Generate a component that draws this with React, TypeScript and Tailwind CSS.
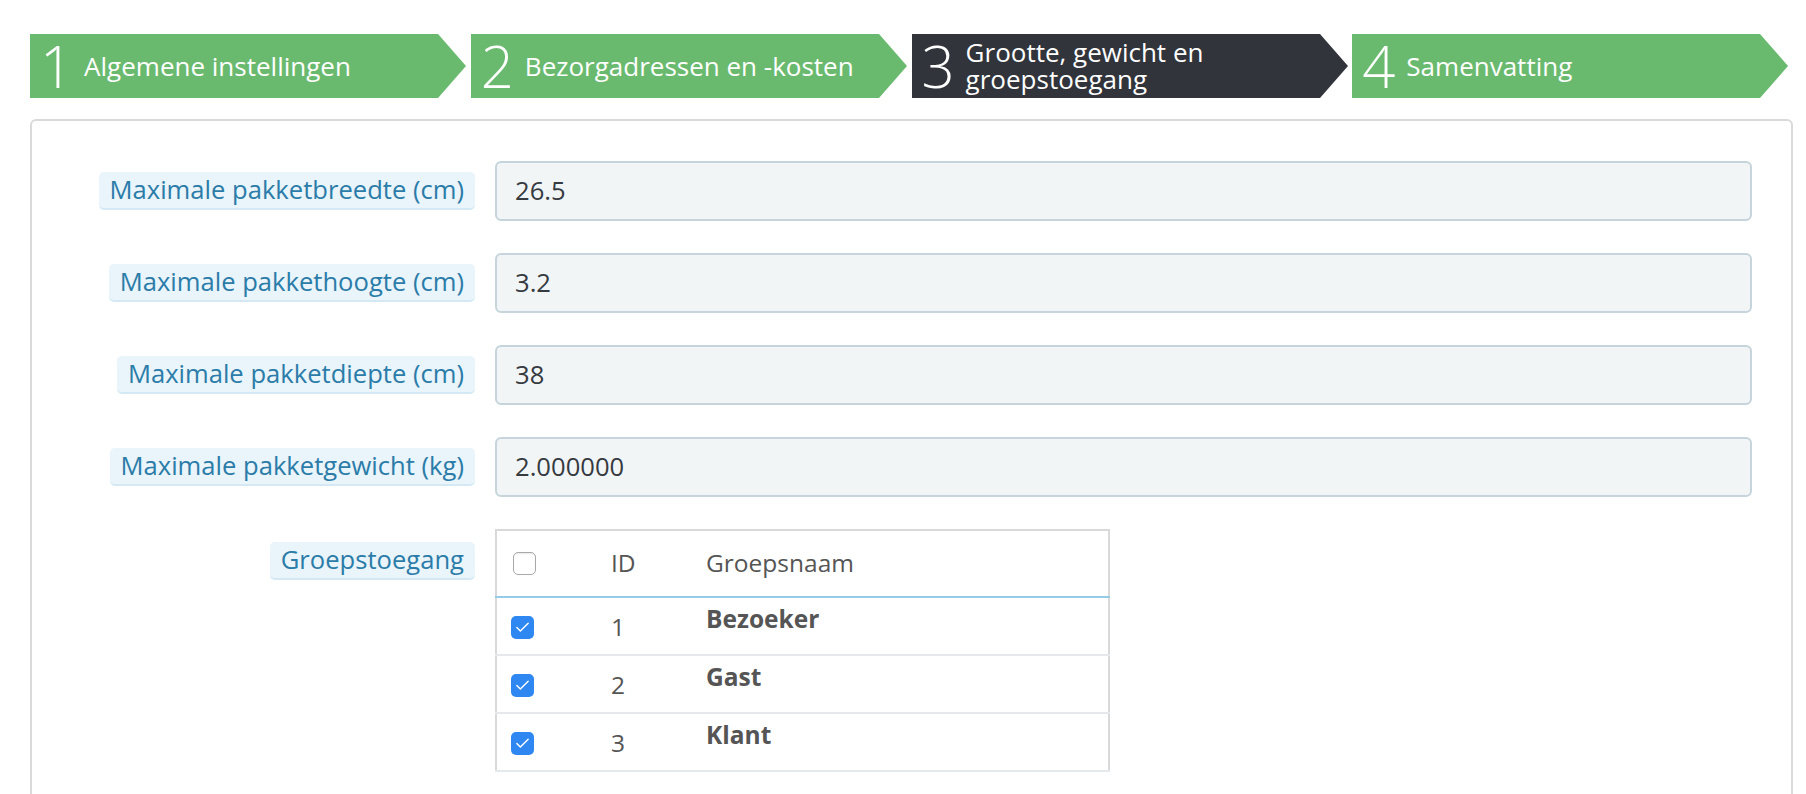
import { Check } from 'lucide-react'

const steps = [
  { nr: '1', title: 'Algemene instellingen', active: false },
  { nr: '2', title: 'Bezorgadressen en -kosten', active: false },
  { nr: '3', title: 'Grootte, gewicht en groepstoegang', active: true },
  { nr: '4', title: 'Samenvatting', active: false },
]

const fields = [
  { label: 'Maximale pakketbreedte (cm)', value: '26.5' },
  { label: 'Maximale pakkethoogte (cm)', value: '3.2' },
  { label: 'Maximale pakketdiepte (cm)', value: '38' },
  { label: 'Maximale pakketgewicht (kg)', value: '2.000000' },
]

const groups = [
  { id: 1, name: 'Bezoeker' },
  { id: 2, name: 'Gast' },
  { id: 3, name: 'Klant' },
]

function Box({ checked }: { checked: boolean }) {
  if (checked) {
    return (
      <span className="flex h-[23px] w-[23px] items-center justify-center rounded-[5px] bg-[#2f88f2]">
        <Check size={17} strokeWidth={2} className="text-white" />
      </span>
    )
  }
  return <span className="block h-[23px] w-[23px] rounded-[5px] border border-[#a9a9a9] bg-white shadow-[inset_0_1px_1px_rgba(0,0,0,0.08)]" />
}

export default function App() {
  return (
    <main className="min-h-screen bg-white pl-[30px] pr-[13px] pt-[34px] font-['Open_Sans',sans-serif]">
      <ul className="grid grid-cols-4">
        {steps.map((s) => {
          const bg = s.active ? 'bg-[#31343b]' : 'bg-[#69ba6e]'
          const fill = s.active ? '#31343b' : '#69ba6e'
          return (
            <li key={s.nr} className="flex h-16">
              <div className={`${bg} flex w-[408px] items-center gap-[11px] pl-[10px] text-white`}>
                <span className="text-[58px] font-light leading-none">{s.nr}</span>
                <span className="pr-4 text-[26px] leading-[27px]">{s.title}</span>
              </div>
              <svg width="28" height="64" viewBox="0 0 28 64" className="block">
                <polygon points="0,0 28,32 0,64" fill={fill} />
              </svg>
            </li>
          )
        })}
      </ul>

      <section className="mt-[21px] rounded-[6px] border-2 border-[#dadada] pb-10 pl-0 pr-[39px] pt-[40px]">
        <div className="flex flex-col gap-8">
          {fields.map((f) => (
            <div key={f.label} className="flex items-center gap-5">
              <div className="flex w-[443px] justify-end">
                <span className="rounded-[5px] border-b-2 border-[#d5e9f5] bg-[#e9f4fb] px-[11px] py-[1px] text-[25.6px] leading-[34px] text-[#2b7ca8]">
                  {f.label}
                </span>
              </div>
              <div className="flex h-[60px] flex-1 items-center rounded-[6px] border-2 border-[#c6d4db] bg-[#f2f5f6] px-[18px] text-[25.6px] text-[#363a41]">
                {f.value}
              </div>
            </div>
          ))}

          <div className="flex items-start gap-5">
            <div className="flex w-[443px] justify-end pt-[13px]">
              <span className="rounded-[5px] border-b-2 border-[#d5e9f5] bg-[#e9f4fb] px-[11px] py-[1px] text-[25.6px] leading-[34px] text-[#2b7ca8]">
                Groepstoegang
              </span>
            </div>
            <table className="w-[615px] border-collapse border-2 border-[#d9d9d9] text-[24.5px] text-[#555]">
              <thead>
                <tr className="h-[67px] border-b-2 border-[#95cbe5]">
                  <th className="w-[115px] pl-[16px] text-left font-normal"><Box checked={false} /></th>
                  <th className="w-[95px] text-left font-normal">ID</th>
                  <th className="text-left font-normal">Groepsnaam</th>
                </tr>
              </thead>
              <tbody>
                {groups.map((g) => (
                  <tr key={g.id} className="h-[58px] border-b-2 border-[#e5e9ec]">
                    <td className="pl-[14px] pt-[3px]"><Box checked /></td>
                    <td className="pt-[2px]">{g.id}</td>
                    <td className="pb-[14px] font-bold">{g.name}</td>
                  </tr>
                ))}
              </tbody>
            </table>
          </div>
        </div>
      </section>
    </main>
  )
}
